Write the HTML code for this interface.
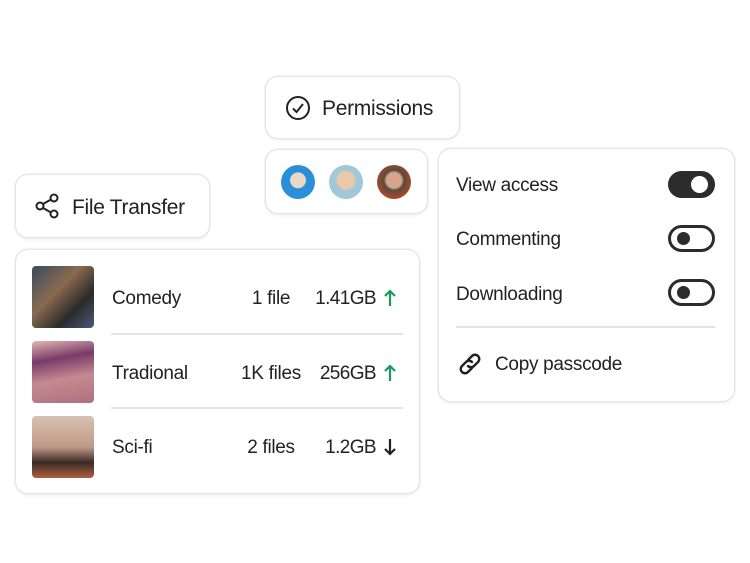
<!DOCTYPE html><html><head><style>
body{margin:0;width:750px;height:563px;background:#fff;font-family:"Liberation Sans",sans-serif;color:#222;position:relative;overflow:hidden}
.c{position:absolute;background:#fff;border-radius:12px;box-shadow:0 0 0 1.5px #e6e6e6,0 2px 4px rgba(0,0,0,.08)}
.t{position:absolute;font-size:19px;white-space:nowrap;letter-spacing:-0.3px}
.r{right:374px;text-align:right;letter-spacing:-0.6px}
.m{left:221px;width:100px;text-align:center}
.tg{position:absolute;left:668px;width:41px;height:21px;border:3px solid #2c2c2c;border-radius:14px}
.tg i{position:absolute;top:4px;left:6px;width:13px;height:13px;border-radius:50%;background:#2c2c2c}
.on{background:#2c2c2c}.on i{left:auto;right:4px;background:#fff;width:17px;height:17px;top:2px}
.av{position:absolute;top:165px;width:34px;height:34px;border-radius:50%}
.th{position:absolute;left:32px;width:62px;height:62px;border-radius:4px}
.hr{position:absolute;height:2px;background:#e3e3e3}
.ar{position:absolute}
</style></head><body>
<div class="c" style="left:266px;top:77px;width:193px;height:61px"></div>
<svg style="position:absolute;left:285px;top:95px" width="26" height="26" viewBox="0 0 26 26"><circle cx="13" cy="13" r="11" fill="none" stroke="#222" stroke-width="2"/><path d="M8 13.5l3.5 3.5 6.5-8" fill="none" stroke="#222" stroke-width="2"/></svg>
<div class="t" style="left:322px;top:97px;font-size:21px">Permissions</div>
<div class="c" style="left:266px;top:150px;width:161px;height:63px"></div>
<div class="av" style="left:281px;background:radial-gradient(circle at 50% 45%,#e8d8c8 30%,#2a8fd8 33%)"></div>
<div class="av" style="left:329px;background:radial-gradient(circle at 50% 45%,#e9c9a8 35%,#9fc8d8 40%)"></div>
<div class="av" style="left:377px;background:radial-gradient(circle at 50% 45%,#d7a58a 30%,#5a4a40 40%,#c04a20 80%)"></div>
<div class="c" style="left:439px;top:149px;width:295px;height:252px"></div>
<div class="t" style="left:456px;top:175px">View access</div>
<div class="t" style="left:456px;top:229px">Commenting</div>
<div class="t" style="left:456px;top:284px">Downloading</div>
<div class="tg on" style="top:171px"><i></i></div>
<div class="tg" style="top:225px"><i></i></div>
<div class="tg" style="top:279px"><i></i></div>
<div class="hr" style="left:456px;top:326px;width:259px"></div>
<svg style="position:absolute;left:456px;top:350px" width="28" height="28" viewBox="0 0 28 28" fill="none" stroke="#222" stroke-width="2.4" stroke-linecap="round"><path d="M12 10l4-4a4.2 4.2 0 016 6l-4 4a4.2 4.2 0 01-6 0M16 18l-4 4a4.2 4.2 0 01-6-6l4-4a4.2 4.2 0 016 0"/></svg>
<div class="t" style="left:495px;top:354px">Copy passcode</div>
<div class="c" style="left:16px;top:175px;width:193px;height:62px"></div>
<svg style="position:absolute;left:34px;top:193px" width="26" height="26" viewBox="0 0 26 26" fill="none" stroke="#222" stroke-width="2"><circle cx="6" cy="13" r="3.5"/><circle cx="20" cy="5" r="3.5"/><circle cx="20" cy="21" r="3.5"/><path d="M9 11l8-4.5M9 15l8 4.5"/></svg>
<div class="t" style="left:72px;top:196px;font-size:21px">File Transfer</div>
<div class="c" style="left:16px;top:250px;width:403px;height:243px"></div>
<div class="th" style="top:266px;background:linear-gradient(135deg,#3a4a60,#8a6a50 40%,#2a2a2a 70%,#4a5a7a)"></div>
<div class="th" style="top:341px;background:linear-gradient(170deg,#e0b8b0,#7a3a6a 30%,#c48a90 60%,#b07080)"></div>
<div class="th" style="top:416px;background:linear-gradient(180deg,#d8c0b0,#c09a88 50%,#3a2a25 75%,#b06040)"></div>
<div class="t" style="left:112px;top:288px">Comedy</div>
<div class="t" style="left:112px;top:363px">Tradional</div>
<div class="t" style="left:112px;top:437px">Sci-fi</div>
<div class="t m" style="top:288px">1 file</div>
<div class="t m" style="top:363px">1K files</div>
<div class="t m" style="top:437px">2 files</div>
<div class="t r" style="top:288px">1.41GB</div>
<div class="t r" style="top:363px">256GB</div>
<div class="t r" style="top:437px">1.2GB</div>
<svg class="ar" style="left:383px;top:289px" width="14" height="18" viewBox="0 0 14 18" fill="none" stroke="#1a9a5a" stroke-width="2.2"><path d="M7 17V2M2 7l5-5 5 5"/></svg>
<svg class="ar" style="left:383px;top:364px" width="14" height="18" viewBox="0 0 14 18" fill="none" stroke="#1a9a5a" stroke-width="2.2"><path d="M7 17V2M2 7l5-5 5 5"/></svg>
<svg class="ar" style="left:383px;top:438px" width="14" height="18" viewBox="0 0 14 18" fill="none" stroke="#222" stroke-width="2.2"><path d="M7 1v15M2 11l5 5 5-5"/></svg>
<div class="hr" style="left:111px;top:333px;width:292px"></div>
<div class="hr" style="left:111px;top:407px;width:292px"></div>
</body></html>
